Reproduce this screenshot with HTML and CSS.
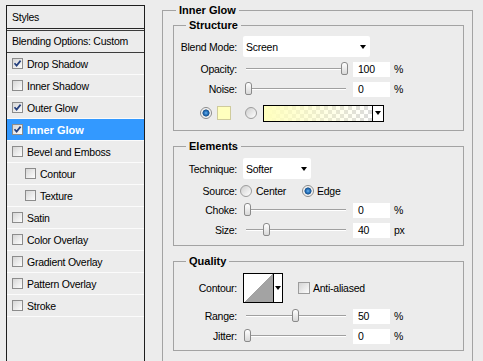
FILE: index.html
```html
<!DOCTYPE html>
<html>
<head>
    <title>Layer Style</title>
    <link rel="stylesheet" href="styles.css">
</head>
<body>
    <div class="window">
        <div class="styles-panel">
            <div class="panel-head">Styles</div>
            <div class="panel-blend">Blending Options: Custom</div>
            <ul class="style-list">
                <li><span class="check on"><svg viewBox="0 0 9 9"><path d="M1.5 4.2 L3.6 6.6 L7.6 1.6"/></svg></span>Drop Shadow</li>
                <li><span class="check"></span>Inner Shadow</li>
                <li><span class="check on"><svg viewBox="0 0 9 9"><path d="M1.5 4.2 L3.6 6.6 L7.6 1.6"/></svg></span>Outer Glow</li>
                <li class="selected"><span class="check on"><svg viewBox="0 0 9 9"><path d="M1.5 4.2 L3.6 6.6 L7.6 1.6"/></svg></span>Inner Glow</li>
                <li><span class="check"></span>Bevel and Emboss</li>
                <li class="sub"><span class="check"></span>Contour</li>
                <li class="sub"><span class="check"></span>Texture</li>
                <li><span class="check"></span>Satin</li>
                <li><span class="check"></span>Color Overlay</li>
                <li><span class="check"></span>Gradient Overlay</li>
                <li><span class="check"></span>Pattern Overlay</li>
                <li><span class="check"></span>Stroke</li>
            </ul>
        </div>

        <div class="options">
            <fieldset class="group outer">
                <legend>Inner Glow</legend>

                <fieldset class="group structure">
                    <legend>Structure</legend>
                    <div class="row row-select">
                        <span class="label">Blend Mode:</span>
                        <div class="select blend">Screen<span class="arrow"></span></div>
                    </div>
                    <div class="row row-slider first">
                        <span class="label">Opacity:</span>
                        <div class="slider"><span class="track"></span><span class="thumb" style="left: 98px"></span></div>
                        <span class="num">100</span><span class="unit">%</span>
                    </div>
                    <div class="row row-slider">
                        <span class="label">Noise:</span>
                        <div class="slider"><span class="track"></span><span class="thumb" style="left: 2px"></span></div>
                        <span class="num">0</span><span class="unit">%</span>
                    </div>
                    <div class="row row-color">
                        <span class="radio on"></span>
                        <span class="swatch"></span>
                        <span class="radio second"></span>
                        <div class="gradient">
                            <span class="gradient-fill"></span>
                            <span class="gradient-drop"><span class="arrow"></span></span>
                        </div>
                    </div>
                </fieldset>

                <fieldset class="group elements">
                    <legend>Elements</legend>
                    <div class="row row-select">
                        <span class="label">Technique:</span>
                        <div class="select technique">Softer<span class="arrow"></span></div>
                    </div>
                    <div class="row row-source">
                        <span class="label">Source:</span>
                        <span class="radio src"></span><span class="opt-center">Center</span>
                        <span class="radio on"></span><span class="opt-edge">Edge</span>
                    </div>
                    <div class="row row-slider">
                        <span class="label">Choke:</span>
                        <div class="slider"><span class="track"></span><span class="thumb" style="left: 1px"></span></div>
                        <span class="num">0</span><span class="unit">%</span>
                    </div>
                    <div class="row row-slider">
                        <span class="label">Size:</span>
                        <div class="slider"><span class="track"></span><span class="thumb" style="left: 20px"></span></div>
                        <span class="num">40</span><span class="unit">px</span>
                    </div>
                </fieldset>

                <fieldset class="group quality">
                    <legend>Quality</legend>
                    <div class="row row-contour">
                        <span class="label">Contour:</span>
                        <div class="contour">
                            <span class="contour-preview"></span>
                            <span class="contour-drop"><span class="arrow"></span></span>
                        </div>
                        <span class="box"></span><span class="opt-anti">Anti-aliased</span>
                    </div>
                    <div class="row row-slider range">
                        <span class="label">Range:</span>
                        <div class="slider"><span class="track"></span><span class="thumb" style="left: 49px"></span></div>
                        <span class="num">50</span><span class="unit">%</span>
                    </div>
                    <div class="row row-slider">
                        <span class="label">Jitter:</span>
                        <div class="slider"><span class="track"></span><span class="thumb" style="left: 1px"></span></div>
                        <span class="num">0</span><span class="unit">%</span>
                    </div>
                </fieldset>
            </fieldset>
        </div>
    </div>
</body>
</html>
```

FILE: styles.css
```css
body {
    margin: 0;
    height: 361px;
    overflow: hidden;
    background-color: #ececec;
    font-family: "Liberation Sans", Arial, sans-serif;
    font-size: 10.5px;
    letter-spacing: -0.25px;
    color: #000;
}
.window {
    display: flex;
    height: 361px;
}

/* left list of styles */
.styles-panel {
    flex: none;
    width: 137px;
    margin: 5px 0 0 6px;
    border: 1px solid #1e1e1e;
    border-bottom: none;
}
.panel-head {
    height: 22px;
    line-height: 22px;
    padding-left: 5px;
    border-bottom: 1px solid #262626;
}
.panel-blend {
    margin-top: 1px;
    height: 21px;
    line-height: 21px;
    padding-left: 5px;
    border-top: 1px solid #3c3c3c;
    border-bottom: 1px solid #3c3c3c;
}
.style-list {
    list-style-type: none;
    margin: 0;
    padding: 0;
}
.style-list li {
    display: flex;
    align-items: center;
    height: 21px;
    padding-left: 5px;
    border-bottom: 1px solid #fbfbfb;
}
.style-list li.sub {
    padding-left: 18px;
}
.style-list li.selected {
    background-color: #3399ff;
    color: #fff;
    font-size: 11px;
    font-weight: bold;
    letter-spacing: 0;
}
.check {
    display: flex;
    align-items: center;
    justify-content: center;
    width: 11px;
    height: 11px;
    margin-right: 4px;
    box-sizing: border-box;
    border: 1px solid #8c8c8c;
    background: linear-gradient(135deg, #d6d6d6, #fdfdfd);
}
.check svg {
    width: 9px;
    height: 9px;
}
.check svg path {
    fill: none;
    stroke: #25407e;
    stroke-width: 1.7;
}

/* right side options */
.options {
    flex: none;
    width: 311px;
    margin-left: 17px;
    padding-top: 3px;
}
.group {
    margin: 0;
    padding: 0;
    min-width: 0;
    border: 1px solid #a3a3a3;
}
.group legend {
    margin-left: 12px;
    padding: 0 3px;
    line-height: 14px;
    font-size: 11px;
    font-weight: bold;
    letter-spacing: 0;
}
.outer {
    padding: 1px 8px 40px 10px;
}
.outer > legend {
    margin-left: 3px;
}
.structure {
    padding: 4px 0 7px;
}
.elements {
    margin-top: 8px;
    padding: 5px 0 5px;
}
.quality {
    margin-top: 8px;
    padding: 5px 0 4px;
}

.row {
    display: flex;
    align-items: center;
}
.label {
    flex: none;
    width: 63px;
    text-align: right;
}
.row-select {
    height: 21px;
}
.row-slider {
    height: 20px;
}
.row-slider.first {
    margin-top: 2px;
}

.select {
    position: relative;
    display: flex;
    align-items: center;
    height: 21px;
    margin-left: 6px;
    padding-left: 3px;
    box-sizing: border-box;
    background: #fff;
    border-radius: 2px;
}
.select.blend {
    width: 127px;
}
.select.technique {
    width: 68px;
}
.select .arrow {
    margin-left: auto;
    margin-right: 4px;
}
.arrow {
    width: 0;
    height: 0;
    border-left: 3.5px solid transparent;
    border-right: 3.5px solid transparent;
    border-top: 4px solid #000;
}

.slider {
    position: relative;
    flex: none;
    width: 107px;
    height: 20px;
    margin-left: 6px;
}
.track {
    position: absolute;
    left: 3px;
    right: 4px;
    top: 9px;
    height: 1px;
    background: #a0a0a0;
    border-bottom: 1px solid #fff;
}
.thumb {
    position: absolute;
    top: 3px;
    width: 7px;
    height: 13px;
    box-sizing: border-box;
    border: 1px solid #8a8a8a;
    border-radius: 3px 3px 2px 2px;
    background: linear-gradient(#ffffff, #d8d8d8);
}
.num {
    flex: none;
    width: 37px;
    height: 15px;
    line-height: 15px;
    margin-left: 3px;
    padding-left: 5px;
    box-sizing: border-box;
    background: #fff;
}
.unit {
    margin-left: 4px;
}

.radio {
    flex: none;
    width: 12px;
    height: 12px;
    box-sizing: border-box;
    border: 1px solid #9c9c9c;
    border-radius: 50%;
    background: linear-gradient(135deg, #cfcfcf, #ffffff);
}
.radio.on {
    border-color: #8a8a8a;
    background: radial-gradient(circle, #6fb4ec 0, #2f7bc4 1.6px, #16508c 3.2px, #e4e4e4 3.8px, #ffffff 5px);
}

.row-color {
    height: 20px;
    margin-top: 4px;
    padding-left: 26px;
}
.swatch {
    width: 14px;
    height: 14px;
    margin-left: 5px;
    box-sizing: border-box;
    border: 1px solid #cfcb9c;
    background: #ffffbe;
}
.radio.second {
    margin-left: 14px;
}
.gradient {
    display: flex;
    width: 121px;
    height: 17px;
    margin-left: 6px;
    box-sizing: border-box;
    border: 1px solid #000;
}
.gradient-fill {
    flex: 1;
    background:
        linear-gradient(to right, #ffffbe, rgba(255, 255, 190, 0)),
        conic-gradient(#dcdcdc 25%, #fff 0 50%, #dcdcdc 0 75%, #fff 0) 0 0 / 8px 8px;
}
.gradient-drop {
    display: flex;
    align-items: center;
    justify-content: center;
    width: 10px;
    border-left: 1px solid #000;
    background: #fff;
}

.row-source {
    height: 19px;
    margin-top: 2px;
}
.radio.src {
    margin-left: 3px;
}
.opt-center {
    width: 46px;
    margin-left: 4px;
}
.opt-edge {
    margin-left: 3px;
}

.row-contour {
    height: 30px;
}
.contour {
    display: flex;
    width: 40px;
    height: 30px;
    margin-left: 6px;
    box-sizing: border-box;
    border: 1px solid #000;
}
.contour-preview {
    width: 29px;
    background: linear-gradient(to top left, #a3a3a3 50%, #ffffff 50%);
}
.contour-drop {
    display: flex;
    align-items: center;
    justify-content: center;
    flex: 1;
    border-left: 1px solid #000;
    background: #fff;
}
.box {
    width: 12px;
    height: 12px;
    margin-left: 15px;
    box-sizing: border-box;
    border: 1px solid #9c9c9c;
    background: linear-gradient(135deg, #d4d4d4, #fdfdfd);
}
.opt-anti {
    margin-left: 3px;
}
.range {
    margin-top: 3px;
}
```
